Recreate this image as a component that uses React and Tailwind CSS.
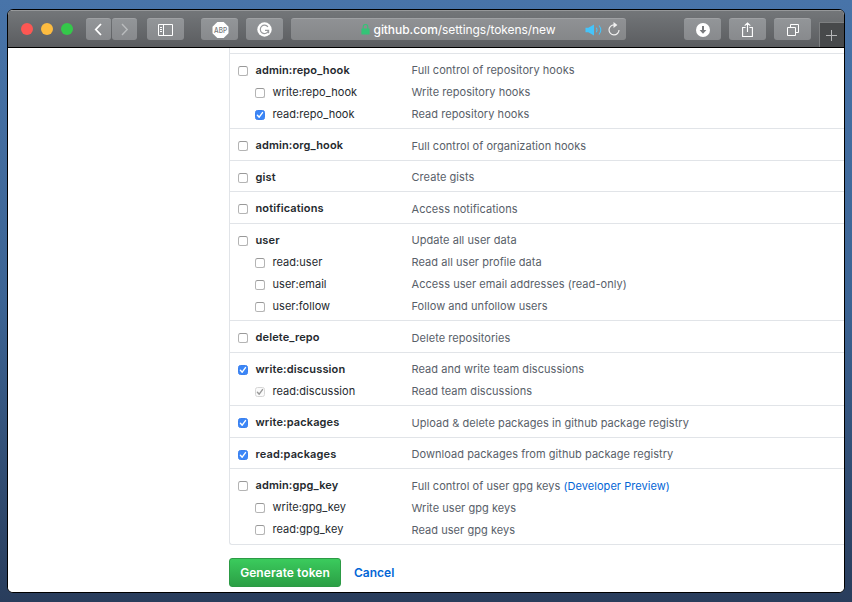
import React from "react";

const groups = [
  { h: "h-[75px]", rows: [["admin:repo_hook", "Full control of repository hooks", 0, 0], ["write:repo_hook", "Write repository hooks", 0, 0], ["read:repo_hook", "Read repository hooks", 1, 0]] },
  { h: "h-8", rows: [["admin:org_hook", "Full control of organization hooks", 0, 1]] },
  { h: "h-[31px]", rows: [["gist", "Create gists", 0, 0]] },
  { h: "h-8", rows: [["notifications", "Access notifications", 0, 1]] },
  { h: "h-[97px]", rows: [["user", "Update all user data", 0, 0], ["read:user", "Read all user profile data", 0, 0], ["user:email", "Access user email addresses (read-only)", 0, 0], ["user:follow", "Follow and unfollow users", 0, 0]] },
  { h: "h-8", rows: [["delete_repo", "Delete repositories", 0, 1]] },
  { h: "h-[53px]", rows: [["write:discussion", "Read and write team discussions", 1, 0], ["read:discussion", "Read team discussions", 2, 0]] },
  { h: "h-8", rows: [["write:packages", "Upload & delete packages in github package registry", 1, 1]] },
  { h: "h-[31px]", rows: [["read:packages", "Download packages from github package registry", 1, 0]] },
  { h: "h-[76px]", rows: [["admin:gpg_key", "Full control of user gpg keys", 0, 1, "(Developer Preview)"], ["write:gpg_key", "Write user gpg keys", 0, 1], ["read:gpg_key", "Read user gpg keys", 0, 1]] },
];

function Checkbox({ state }) {
  const look =
    state === 1 ? "bg-[#3b86f7] border-[#3b80ee]" : state === 2 ? "bg-[#fafafa] border-[#d6d6d6]" : "bg-white border-[#b4b4b4] border-t-[#999]";
  return (
    <span role="checkbox" aria-checked={state > 0} className={`size-2.5 shrink-0 rounded-[2.5px] border ${look}`}>
      {state > 0 && (
        <svg viewBox="0 0 8 8" className="block size-2" fill="none" stroke={state === 1 ? "#fff" : "#999"} strokeWidth="1.4" strokeLinecap="round" strokeLinejoin="round">
          <path d="M1.4 4.3 3.2 6.2 6.5 1.6" />
        </svg>
      )}
    </span>
  );
}

function ToolButton({ className = "w-[37px]", children }) {
  return (
    <div className={`flex h-[22px] shrink-0 items-center justify-center rounded-[3px] border-t border-[#9fa1a4] bg-linear-to-b from-[#929598] to-[#888a8d] text-white ${className}`}>
      {children}
    </div>
  );
}

function Toolbar() {
  return (
    <header className="flex h-[38px] shrink-0 items-center border-t border-b border-t-[#96989a] border-b-black bg-linear-to-b from-[#737679] to-[#5b5d60] pl-[13px]">
      <div className="mr-[13px] flex gap-2">
        <span className="size-3 rounded-full bg-[#fc5753]" />
        <span className="size-3 rounded-full bg-[#fdbc40]" />
        <span className="size-3 rounded-full bg-[#34c84a]" />
      </div>
      <div className="mr-2.5 flex gap-px">
        <ToolButton className="w-[25px]">
          <svg width="9" height="13" viewBox="0 0 9 13" fill="none" stroke="currentColor" strokeWidth="1.8"><path d="M7 1 1.8 6.5 7 12" /></svg>
        </ToolButton>
        <ToolButton className="w-[25px]">
          <svg width="9" height="13" viewBox="0 0 9 13" fill="none" stroke="#b9bbbd" strokeWidth="1.4"><path d="M2 1 7.2 6.5 2 12" /></svg>
        </ToolButton>
      </div>
      <ToolButton className="mr-[17px] w-[37px]">
        <svg width="15" height="12" viewBox="0 0 15 12" fill="none" stroke="currentColor"><path d="M.5.5h14v11H.5zM5.5.5v11M2 3.5h2M2 5.5h2M2 7.5h2" /></svg>
      </ToolButton>
      <ToolButton className="mr-2 w-[37px]">
        <svg width="17" height="16" viewBox="0 0 17 16" className="ml-px"><path d="M5.3 0h6.4l4.8 4.8v6.4L11.7 16H5.3L.5 11.2V4.8z" fill="#fff" /><text x="2.1" y="10.6" textLength="13" lengthAdjust="spacingAndGlyphs" fontSize="7.4" fontWeight="500" fill="#77797c" fontFamily="Inter, sans-serif">ABP</text></svg>
      </ToolButton>
      <ToolButton className="mr-2 w-[37px]">
        <svg width="15" height="15" viewBox="0 0 15 15" fill="none"><circle cx="7.5" cy="7.5" r="7.2" fill="#fff" /><path d="M10.9 4.9A4.2 4.2 0 1 0 11.2 9.4M8 8.3h3.6v2.9" stroke="#999b9e" strokeWidth="1.2" /></svg>
      </ToolButton>
      <div className="mr-[58px] flex h-[22px] w-[335px] shrink-0 items-center rounded-[3px] border-t border-[#9fa1a4] bg-linear-to-b from-[#8f9194] to-[#858789] pl-[70px] text-white">
        <svg width="9" height="11" viewBox="0 0 9 11" fill="none" className="mr-[3.5px] shrink-0"><path d="M2.2 5V2.8a2.3 2.3 0 0 1 4.6 0V5" stroke="#34c477" strokeWidth="1.1" /><rect x=".4" y="4.4" width="8.2" height="6.2" rx=".6" fill="#34c477" /></svg>
        <span className="mt-px w-[184px] shrink-0 whitespace-nowrap text-[12px] tracking-[-0.06px]"><span className="font-medium">github.com</span>/settings/tokens/new</span>
        <svg width="18" height="12" viewBox="0 0 18 12" fill="none" className="ml-[27px] mr-[5px] shrink-0"><path d="M.5 3.8h2.8L9 .6v10.8L3.3 8.2H.5z" fill="#45c4fa" /><path d="M11.2 3.8q1.6 2.2 0 4.4M14 1.5q3.6 4.5 0 9" stroke="#45c4fa" strokeWidth="1.1" /></svg>
        <svg width="12" height="14" viewBox="0 0 12 14" fill="none" className="mb-px shrink-0"><path d="M6 2.9A5 5 0 1 0 11 8" stroke="#f0f0f0" strokeWidth="1.2" /><path d="M5.5 0 9.4 3 5.5 6z" fill="#f0f0f0" /></svg>
      </div>
      <ToolButton className="mr-2 w-[37px]">
        <svg width="14" height="14" viewBox="0 0 14 14" fill="none"><circle cx="7" cy="7" r="7" fill="#fff" /><path d="M7 3v6" stroke="#77797c" strokeWidth="2" /><path d="M3.6 7h6.8L7 10.8z" fill="#77797c" /></svg>
      </ToolButton>
      <ToolButton className="mr-2 w-[37px]">
        <svg width="11" height="15" viewBox="0 0 11 15" fill="none" stroke="currentColor" strokeWidth="1.1"><path d="M3.6 5.5H.6v9h9.8v-9h-3M5.5 10V1M2.7 3.6 5.5.9l2.8 2.7" /></svg>
      </ToolButton>
      <ToolButton className="mr-2 w-[37px]">
        <svg width="12" height="12" viewBox="0 0 12 12" fill="none" stroke="currentColor"><path d="M.5 3.5h8v8h-8zM3.5 3.5v-3h8v8h-3" /></svg>
      </ToolButton>
      <div className="flex h-[25px] grow items-center justify-center self-end border-t border-l border-[#7d7f81] bg-[#47494b] pr-0.5 text-[#b5b6b8]">
        <svg width="11" height="11" viewBox="0 0 11 11" stroke="currentColor"><path d="M5.5 0v11M0 5.5h11" /></svg>
      </div>
    </header>
  );
}

export default function App() {
  return (
    <div className="h-[602px] w-[852px] overflow-hidden bg-linear-to-b from-[#4874a9] via-[#3c6494] to-[#293d5c] pt-[9px] pl-[7px] font-[Inter,'Liberation_Sans',sans-serif]">
      <div className="flex h-[584px] w-[838px] flex-col overflow-hidden rounded-[6px] border border-black bg-white">
        <Toolbar />
        <main className="grow bg-white pl-[221px]">
          <div className="rounded-bl-[3px] border-b border-l border-[#e1e4e8] pt-[5px]">
            {groups.map((g) => (
              <section key={g.rows[0][0]} className={`${g.h} border-t border-[#e1e4e8] pt-[5px]`}>
                {g.rows.map(([name, desc, state, drop, link], i) => (
                  <div key={name} className="flex h-[22px] items-center whitespace-nowrap text-[11px]">
                    <div className={`flex w-[181.5px] items-center gap-[7.5px] text-[#24292e] ${i ? "pl-[25px] tracking-[0.05px]" : "pl-2 font-semibold tracking-[0.13px]"}`}>
                      <div className="flex pt-[2px]"><Checkbox state={state} /></div>
                      <span>{name}</span>
                    </div>
                    <span className={`tracking-[0.05px] text-[#586069] ${drop ? "pt-[2px]" : ""}`}>
                      {desc} {link && <a className="text-[#0366d6]">{link}</a>}
                    </span>
                  </div>
                ))}
              </section>
            ))}
          </div>
          <div className="mt-[13px] flex items-center text-xs font-semibold">
            <button className="h-[29px] w-28 rounded-[3px] border border-[#2c9a45] bg-linear-to-b from-[#3bcb5d] to-[#2b9f45] tracking-[0.07px] text-white">Generate token</button>
            <a className="ml-[13px] text-[#0366d6]">Cancel</a>
          </div>
        </main>
      </div>
    </div>
  );
}
